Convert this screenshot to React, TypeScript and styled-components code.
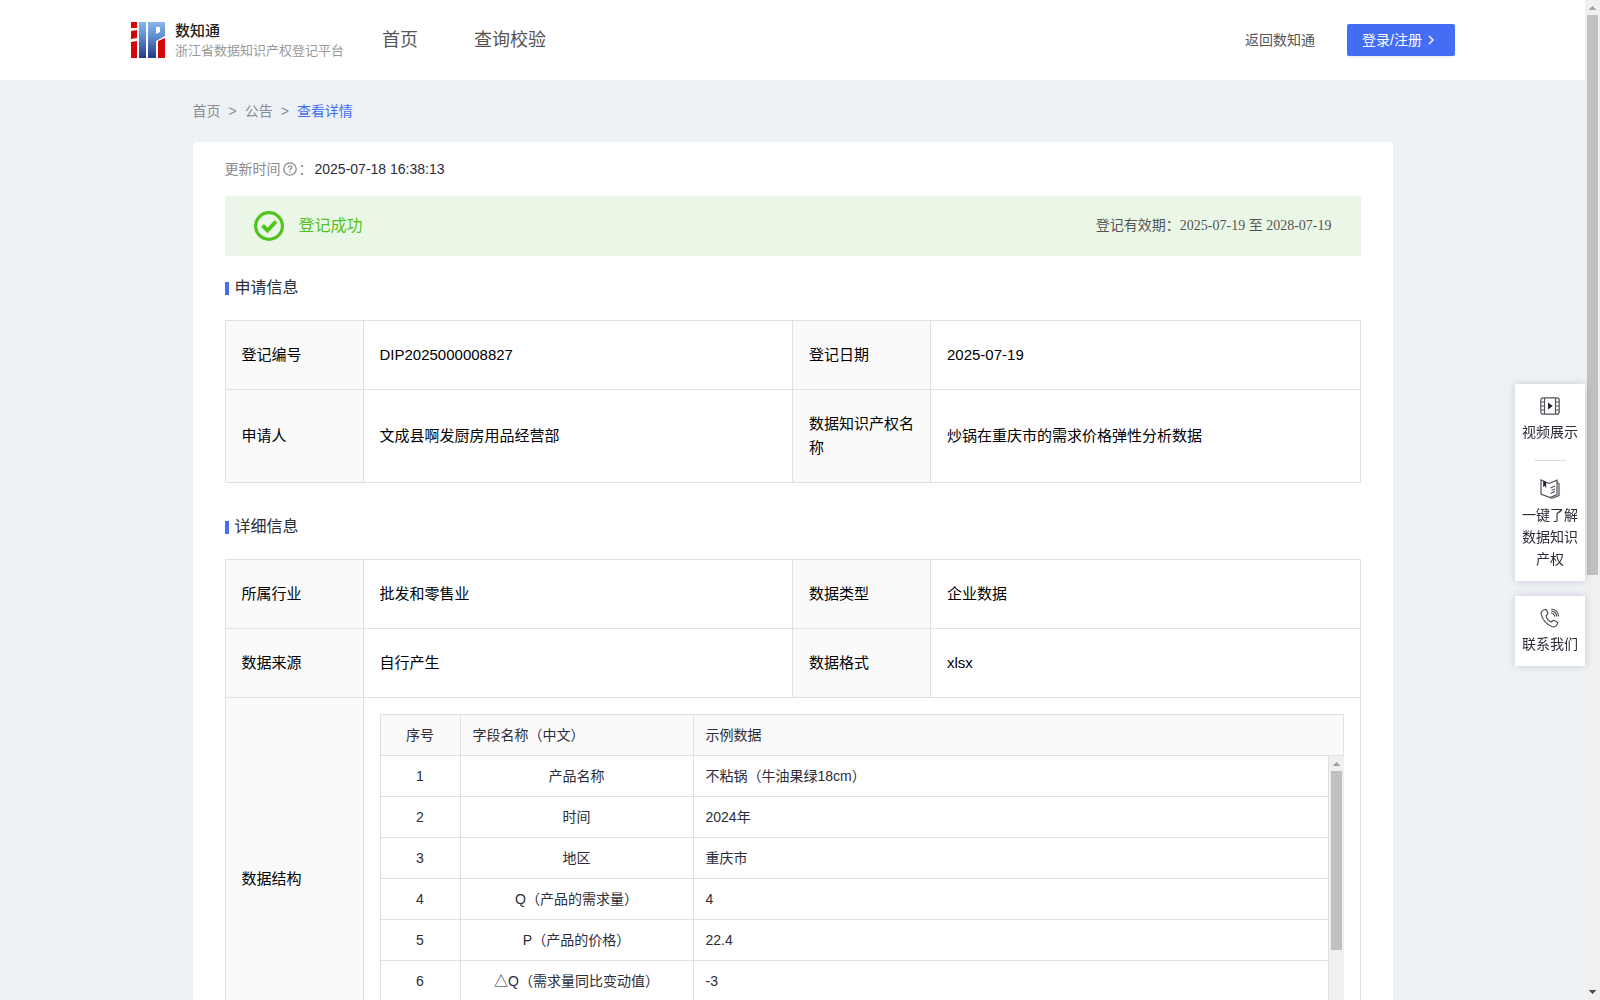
import React from "react";
import styled, { createGlobalStyle } from "styled-components";

const sans = `"Liberation Sans", "Noto Sans CJK SC", sans-serif`;
const serif = `"Liberation Serif", "Noto Sans CJK SC", serif`;

const color = {
  primary: "#446df6",
  page: "#eef2f6",
  line: "#e0e0e0",
  muted: "#8b8b8f",
  text: "#2b2d38",
  nav: "#555555",
  success: "#4fc41d",
  head: "#fafafa",
};

const GlobalStyle = createGlobalStyle`
  *, *::before, *::after { box-sizing: border-box; }
  body {
    margin: 0;
    overflow: hidden;
    font-family: ${sans};
    font-size: 14px;
    line-height: 22px;
    color: ${color.text};
    background: ${color.page};
  }
  a { color: inherit; text-decoration: none; }
  button { font: inherit; border: 0; cursor: pointer; }
`;

const Shell = styled.div`
  display: flex;
  height: 100vh;
`;

const Pane = styled.div`
  flex: 1;
  min-width: 0;
  overflow-y: auto;
  scrollbar-width: none;
`;

const Header = styled.header`
  display: flex;
  align-items: center;
  height: 80px;
  padding: 0 130px;
  background: #fff;
`;

const Brand = styled.a`
  display: flex;
  align-items: center;
  gap: 10px;
  svg { display: block; }
`;

const BrandName = styled.strong`
  display: block;
  font-size: 15px;
  line-height: 22px;
  font-weight: 500;
  color: #222;
`;

const BrandSub = styled.span`
  display: block;
  font-size: 13px;
  line-height: 18px;
  color: #999;
  white-space: nowrap;
`;

const Nav = styled.nav`
  display: flex;
  gap: 56px;
  margin-left: 38px;
  font-size: 18px;
  line-height: 24px;
  color: ${color.nav};
`;

const Account = styled.div`
  display: flex;
  align-items: center;
  gap: 32px;
  margin-left: auto;
  color: ${color.nav};
`;

const LoginButton = styled.button`
  display: flex;
  align-items: center;
  gap: 4px;
  width: 108px;
  height: 32px;
  padding: 0 15px;
  border-radius: 2px;
  color: #fff;
  background: ${color.primary};
  box-shadow: 0 2px 0 rgba(0, 0, 0, 0.05);
  white-space: nowrap;
`;

const Main = styled.main`
  max-width: 1200px;
  margin: 0 auto;
`;

const Breadcrumb = styled.nav`
  display: flex;
  gap: 8px;
  padding: 20px 0;
  color: ${color.muted};
`;

const Current = styled.a`
  color: ${color.primary};
`;

const Card = styled.article`
  padding: 16px 32px 600px;
  border-radius: 4px;
  background: #fff;
`;

const Updated = styled.p`
  display: flex;
  align-items: center;
  gap: 2px;
  margin: 0 0 16px;
  color: ${color.muted};
  time { color: ${color.text}; }
`;

const Banner = styled.div`
  display: flex;
  align-items: center;
  gap: 15px;
  height: 60px;
  padding: 0 29px;
  background: #ebf7e6;
`;

const Status = styled.span`
  font-size: 16px;
  color: ${color.success};
`;

const Validity = styled.span`
  margin-left: auto;
  font-family: ${serif};
  color: ${color.nav};
`;

const Section = styled.section`
  padding-bottom: 12px;
`;

const SectionTitle = styled.h2`
  display: flex;
  align-items: center;
  gap: 6px;
  margin: 20px 0;
  font-size: 16px;
  font-weight: 400;
  line-height: 24px;
  &::before {
    content: "";
    width: 4px;
    height: 13px;
    background: ${color.primary};
  }
`;

const InfoTable = styled.table`
  width: 100%;
  table-layout: fixed;
  border-collapse: collapse;
  font-size: 15px;
  line-height: 24px;
  color: #000;
`;

const LabelCol = styled.col`
  width: 138px;
`;

const InfoLabel = styled.th`
  padding: 22px 16px;
  border: 1px solid ${color.line};
  background: ${color.head};
  font-weight: 400;
  text-align: left;
`;

const InfoValue = styled.td<{ $nested?: boolean }>`
  padding: ${(p) => (p.$nested ? "16px" : "22px 16px")};
  border: 1px solid ${color.line};
`;

const Grid = styled.table`
  width: 100%;
  table-layout: fixed;
  border-collapse: collapse;
  font-size: 14px;
  line-height: 22px;
  color: ${color.text};
`;

const Col = styled.col<{ $width?: number }>`
  width: ${(p) => (p.$width ? `${p.$width}px` : "auto")};
`;

const GridHead = styled.th<{ $center?: boolean }>`
  padding: 9px 12px;
  border: 1px solid ${color.line};
  background: ${color.head};
  font-weight: 400;
  text-align: ${(p) => (p.$center ? "center" : "left")};
`;

const GridCell = styled.td<{ $center?: boolean }>`
  padding: 9px 12px;
  border: 1px solid ${color.line};
  border-top: 0;
  text-align: ${(p) => (p.$center ? "center" : "left")};
`;

const GridBody = styled.div`
  display: flex;
  height: 288px;
`;

const Bar = styled.div`
  flex: none;
  display: flex;
  flex-direction: column;
  align-items: center;
  width: 15px;
  background: #f0f0f0;
`;

const Track = styled.div`
  flex: 1;
  width: 11px;
`;

const Thumb = styled.div<{ $share: number }>`
  height: ${(p) => p.$share}%;
  background: #c1c1c1;
`;

const Arrow = styled.svg`
  display: block;
  flex: none;
`;

const Side = styled.aside`
  position: fixed;
  top: 384px;
  right: 15px;
  display: grid;
  gap: 15px;
  width: 70px;
`;

const SideCard = styled.div`
  padding: 12px 7px 11px;
  background: #fff;
  box-shadow: 0 0 8px rgba(0, 0, 0, 0.16);
`;

const SideLink = styled.a`
  display: grid;
  justify-items: center;
  gap: 5px;
  text-align: center;
`;

const Divider = styled.hr`
  width: 32px;
  height: 1px;
  margin: 17px auto 18px;
  border: 0;
  background: #dcdcdc;
`;

function Scrollbar({ share }: { share: number }) {
  return (
    <Bar aria-hidden="true">
      <Arrow width="15" height="15" viewBox="0 0 15 15">
        <path d="M4 10h7v-1h-1v-1h-1v-1h-1v-1h-1v1h-1v1h-1v1h-1z" fill="#a3a3a3" />
      </Arrow>
      <Track>
        <Thumb $share={share} />
      </Track>
      <Arrow width="15" height="15" viewBox="0 0 15 15">
        <path d="M4 5h7v1h-1v1h-1v1h-1v1h-1v-1h-1v-1h-1v-1h-1z" fill="#505050" />
      </Arrow>
    </Bar>
  );
}

function Logo() {
  return (
    <svg width="35" height="36" viewBox="0 0 35 36" aria-hidden="true">
      <defs>
        <linearGradient id="blue" x1="0" y1="0" x2="0" y2="1">
          <stop offset="0" stopColor="#86b8ea" />
          <stop offset="0.4" stopColor="#5d8fd0" />
          <stop offset="1" stopColor="#243a85" />
        </linearGradient>
      </defs>
      <path d="M1 0h6v6H1zM1 9l6-1v8l-6 1zM1 20l6-1v17H1z" fill="#d3060c" />
      <path d="M9 0h7v36H9z" fill="url(#blue)" />
      <path d="M18 0h17v14l-9 5v17h-8zM26 5v7l4-2V5z" fill="url(#blue)" fillRule="evenodd" />
      <path d="M28 19l7-3v20h-7z" fill="#d3060c" />
    </svg>
  );
}

function HelpIcon() {
  return (
    <svg width="14" height="14" viewBox="0 0 14 14" fill="none" stroke="#8b8b8f" aria-hidden="true">
      <circle cx="7" cy="7" r="6.2" strokeWidth="1.3" />
      <path d="M5.2 5.6c0-2.4 3.6-2.3 3.6-.2C8.8 6.7 7 6.7 7 8.3" strokeWidth="1.3" />
      <circle cx="7" cy="10" r=".8" fill="#8b8b8f" stroke="none" />
    </svg>
  );
}

function SuccessIcon() {
  return (
    <svg width="30" height="30" viewBox="0 0 30 30" fill="none" stroke={color.success} aria-hidden="true">
      <circle cx="15" cy="15" r="13.4" strokeWidth="3.2" />
      <path d="M8.5 14.5l5 5 8.500-9" strokeWidth="4" />
    </svg>
  );
}

function VideoIcon() {
  return (
    <svg width="20" height="20" viewBox="0 0 20 20" fill="none" stroke="#50525b" strokeWidth="1.2" aria-hidden="true">
      <rect x="0.8" y="1.8" width="18.4" height="16.4" rx="2.5" />
      <path d="M4.500 2v16M15.500 2v16M1 6h3.500M1 10h3.500M1 14h3.500M15.500 6H19M15.500 10H19M15.500 14H19" />
      <path d="M8 6.500v7l4.800-3.500z" fill="#22242e" stroke="none" />
    </svg>
  );
}

function BookIcon() {
  return (
    <svg width="20" height="20" viewBox="0 0 20 20" fill="none" stroke="#50525b" strokeWidth="1.2" aria-hidden="true">
      <path d="M9 4.500L1 1v14l9 3.500 7-3V1.200L9 4.500" />
      <path d="M17 3.500l2 1v12l-6 2.500h-3M10.500 9l4.500-2M11.500 11.500l3.500-1.500M10.500 14.500l4.500-2" />
      <path d="M3.200 1.800v6.400l1.500-1.400L6.200 9V3.200z" fill="#22242e" stroke="none" />
    </svg>
  );
}

function PhoneIcon() {
  return (
    <svg width="20" height="20" viewBox="0 0 20 20" fill="none" stroke="#50525b" strokeWidth="1.2" aria-hidden="true">
      <path d="M3.200 2.300L5 1.500c.8-.3 1.400 0 1.700.7l1.100 2.600c.3.700.1 1.200-.4 1.700L6 7.800c.6 2.700 2.700 5 5.300 6.200l1.400-1.300c.6-.5 1.100-.6 1.700-.2l2.600 1.600c.7.400.8 1 .4 1.700l-.9 1.500c-.9 1.500-2.700 1.800-4.600 1.200C6.600 16.700 2.200 11.600 1.200 6 .9 4.400 1.600 3 3.200 2.300z" />
      <path d="M11 5c2.600.3 3.500 1.500 3.800 3.700M11.300 1c4.300.4 6.900 3 7.300 7.400M11.200 3c3.500.4 5.200 2.300 5.600 5.500" />
    </svg>
  );
}

const applyRows = [
  ["登记编号", "DIP2025000008827", "登记日期", "2025-07-19"],
  ["申请人", "文成县啊发厨房用品经营部", "数据知识产权名称", "炒锅在重庆市的需求价格弹性分析数据"],
];

const detailRows = [
  ["所属行业", "批发和零售业", "数据类型", "企业数据"],
  ["数据来源", "自行产生", "数据格式", "xlsx"],
];

const fields = [
  ["产品名称", "不粘锅（牛油果绿18cm）"],
  ["时间", "2024年"],
  ["地区", "重庆市"],
  ["Q（产品的需求量）", "4"],
  ["P（产品的价格）", "22.4"],
  ["△Q（需求量同比变动值）", "-3"],
];

function InfoCols() {
  return (
    <colgroup>
      <LabelCol />
      <col />
      <LabelCol />
      <col />
    </colgroup>
  );
}

function InfoRow({ cells }: { cells: string[] }) {
  return (
    <tr>
      <InfoLabel scope="row">{cells[0]}</InfoLabel>
      <InfoValue>{cells[1]}</InfoValue>
      <InfoLabel scope="row">{cells[2]}</InfoLabel>
      <InfoValue>{cells[3]}</InfoValue>
    </tr>
  );
}

function GridCols() {
  return (
    <colgroup>
      <Col $width={80} />
      <Col $width={233} />
      <Col />
    </colgroup>
  );
}

function FieldGrid() {
  return (
    <>
      <Grid>
        <GridCols />
        <thead>
          <tr>
            <GridHead $center>序号</GridHead>
            <GridHead>字段名称（中文）</GridHead>
            <GridHead>示例数据</GridHead>
          </tr>
        </thead>
      </Grid>
      <GridBody>
        <Pane>
          <Grid>
            <GridCols />
            <tbody>
              {fields.map(([name, sample], i) => (
                <tr key={name}>
                  <GridCell $center>{i + 1}</GridCell>
                  <GridCell $center>{name}</GridCell>
                  <GridCell>{sample}</GridCell>
                </tr>
              ))}
            </tbody>
          </Grid>
        </Pane>
        <Scrollbar share={69.5} />
      </GridBody>
    </>
  );
}

export default function App() {
  return (
    <>
      <GlobalStyle />
      <Shell>
        <Pane>
          <Header>
            <Brand href="#">
              <Logo />
              <span>
                <BrandName>数知通</BrandName>
                <BrandSub>浙江省数据知识产权登记平台</BrandSub>
              </span>
            </Brand>
            <Nav>
              <a href="#home">首页</a>
              <a href="#query">查询校验</a>
            </Nav>
            <Account>
              <a href="#back">返回数知通</a>
              <LoginButton type="button">
                登录/注册
                <svg width="10" height="10" viewBox="0 0 10 10" fill="none" stroke="#fff" strokeWidth="1.4" aria-hidden="true">
                  <path d="M3 1l4 4-4 4" />
                </svg>
              </LoginButton>
            </Account>
          </Header>
          <Main>
            <Breadcrumb>
              <a href="#home">首页</a>
              <span>&gt;</span>
              <a href="#notice">公告</a>
              <span>&gt;</span>
              <Current href="#detail">查看详情</Current>
            </Breadcrumb>
            <Card>
              <Updated>
                更新时间
                <HelpIcon />
                ：<time>2025-07-18 16:38:13</time>
              </Updated>
              <Banner>
                <SuccessIcon />
                <Status>登记成功</Status>
                <Validity>登记有效期：2025-07-19 至 2028-07-19</Validity>
              </Banner>
              <Section>
                <SectionTitle>申请信息</SectionTitle>
                <InfoTable>
                  <InfoCols />
                  <tbody>
                    {applyRows.map((cells) => (
                      <InfoRow key={cells[0]} cells={cells} />
                    ))}
                  </tbody>
                </InfoTable>
              </Section>
              <Section>
                <SectionTitle>详细信息</SectionTitle>
                <InfoTable>
                  <InfoCols />
                  <tbody>
                    {detailRows.map((cells) => (
                      <InfoRow key={cells[0]} cells={cells} />
                    ))}
                    <tr>
                      <InfoLabel scope="row">数据结构</InfoLabel>
                      <InfoValue colSpan={3} $nested>
                        <FieldGrid />
                      </InfoValue>
                    </tr>
                  </tbody>
                </InfoTable>
              </Section>
            </Card>
          </Main>
        </Pane>
        <Scrollbar share={57.7} />
      </Shell>
      <Side>
        <SideCard>
          <SideLink href="#video">
            <VideoIcon />
            视频展示
          </SideLink>
          <Divider />
          <SideLink href="#guide">
            <BookIcon />
            一键了解数据知识产权
          </SideLink>
        </SideCard>
        <SideCard>
          <SideLink href="#contact">
            <PhoneIcon />
            联系我们
          </SideLink>
        </SideCard>
      </Side>
    </>
  );
}
